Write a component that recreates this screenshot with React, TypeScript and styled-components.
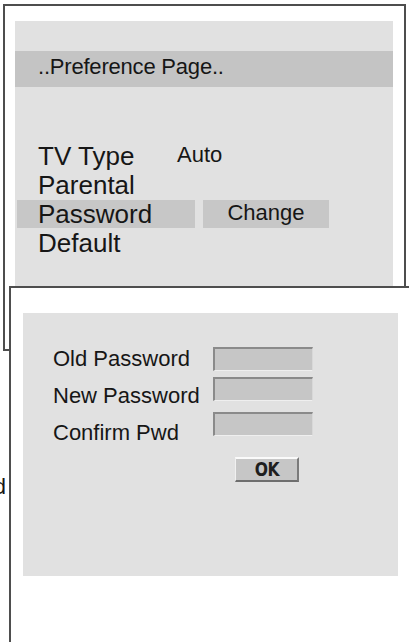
import styled, { createGlobalStyle } from "styled-components";

const GlobalStyle = createGlobalStyle`
  html, body {
    margin: 0;
    padding: 0;
    background: #ffffff;
  }
  body {
    font-family: "Liberation Sans", Arial, sans-serif;
    color: #161616;
  }
`;

const Desktop = styled.div`
  position: relative;
  width: 409px;
  height: 642px;
  overflow: hidden;
  background: #ffffff;
`;

/* windows stacked like dialogs on a screen */
const Window = styled.div<{ $left: number; $top: number; $w: number; $h: number }>`
  position: absolute;
  left: ${(p) => p.$left}px;
  top: ${(p) => p.$top}px;
  width: ${(p) => p.$w}px;
  height: ${(p) => p.$h}px;
  box-sizing: border-box;
  border: 2px solid #4e4e4e;
  background: #ffffff;
  display: flex;
  flex-direction: column;
`;

const Panel = styled.div<{ $mt: number; $ml: number; $w: number; $h: number }>`
  margin-top: ${(p) => p.$mt}px;
  margin-left: ${(p) => p.$ml}px;
  width: ${(p) => p.$w}px;
  height: ${(p) => p.$h}px;
  background: #e1e1e1;
  display: flex;
  flex-direction: column;
`;

const TitleBar = styled.div`
  margin-top: 30px;
  height: 36px;
  background: #c4c4c4;
  font-size: 22px;
  line-height: 26px;
  padding: 3px 0 0 23px;
  box-sizing: border-box;
  letter-spacing: -0.2px;
`;

const MenuList = styled.div`
  margin-top: 55px;
  display: flex;
  flex-direction: column;
`;

const MenuRow = styled.div`
  display: flex;
  align-items: flex-start;
  height: 29px;
  padding-left: 2px;
`;

const MenuLabel = styled.div<{ $sel?: boolean }>`
  width: ${(p) => (p.$sel ? 178 : 160)}px;
  height: 28px;
  box-sizing: border-box;
  padding-left: 21px;
  font-size: 26px;
  line-height: 28px;
  background: ${(p) => (p.$sel ? "#c7c7c7" : "transparent")};
`;

const MenuValue = styled.div<{ $boxed?: boolean }>`
  font-size: 22px;
  line-height: 26px;
  margin-left: ${(p) => (p.$boxed ? 8 : 0)}px;
  width: ${(p) => (p.$boxed ? "126px" : "auto")};
  height: ${(p) => (p.$boxed ? "28px" : "auto")};
  text-align: ${(p) => (p.$boxed ? "center" : "left")};
  background: ${(p) => (p.$boxed ? "#c7c7c7" : "transparent")};
`;

const Form = styled.div`
  display: flex;
  padding: 33px 0 0 30px;
`;

const LabelCol = styled.div`
  width: 160px;
  display: flex;
  flex-direction: column;
  gap: 11px;
  font-size: 22px;
  line-height: 26px;
`;

const FieldCol = styled.div`
  display: flex;
  flex-direction: column;
  align-items: flex-start;
  padding-top: 1px;
`;

const Field = styled.div<{ $mt: number }>`
  margin-top: ${(p) => p.$mt}px;
  width: 100px;
  height: 24px;
  box-sizing: border-box;
  background: #c6c6c6;
  border-top: 2px solid #8a8a8a;
  border-left: 2px solid #8a8a8a;
  border-bottom: 1px solid #efefef;
  border-right: 1px solid #d8d8d8;
`;

const OkButton = styled.div`
  margin: 21px 0 0 22px;
  width: 64px;
  height: 25px;
  box-sizing: border-box;
  background: #c6c6c6;
  border-top: 2px solid #fafafa;
  border-left: 1px solid #f0f0f0;
  border-right: 2px solid #7a7a7a;
  border-bottom: 2px solid #6e6e6e;
  display: flex;
  align-items: center;
  justify-content: center;
  font-family: "DejaVu Sans", sans-serif;
  font-weight: 600;
  font-size: 19px;
  line-height: 19px;
  color: #1e1e1e;
`;

const OkText = styled.span`
  display: inline-block;
  transform: scaleX(0.82);
  letter-spacing: -0.5px;
`;

const Fragment = styled.div`
  position: absolute;
  left: -150px;
  top: 474px;
  width: 156px;
  text-align: right;
  font-size: 22px;
  line-height: 26px;
  white-space: nowrap;
`;

export default function App() {
  return (
    <>
      <GlobalStyle />
      <Desktop>
        <Fragment>Password</Fragment>

        <Window $left={3} $top={4} $w={403} $h={347}>
          <Panel $mt={15} $ml={10} $w={378} $h={318}>
            <TitleBar>..Preference Page..</TitleBar>
            <MenuList>
              <MenuRow>
                <MenuLabel>TV Type</MenuLabel>
                <MenuValue>Auto</MenuValue>
              </MenuRow>
              <MenuRow>
                <MenuLabel>Parental</MenuLabel>
              </MenuRow>
              <MenuRow>
                <MenuLabel $sel>Password</MenuLabel>
                <MenuValue $boxed>Change</MenuValue>
              </MenuRow>
              <MenuRow>
                <MenuLabel>Default</MenuLabel>
              </MenuRow>
            </MenuList>
          </Panel>
        </Window>

        <Window $left={9} $top={286} $w={420} $h={380}>
          <Panel $mt={25} $ml={12} $w={375} $h={263}>
            <Form>
              <LabelCol>
                <span>Old Password</span>
                <span>New Password</span>
                <span>Confirm Pwd</span>
              </LabelCol>
              <FieldCol>
                <Field $mt={0} />
                <Field $mt={6} />
                <Field $mt={11} />
                <OkButton>
                  <OkText>OK</OkText>
                </OkButton>
              </FieldCol>
            </Form>
          </Panel>
        </Window>
      </Desktop>
    </>
  );
}
